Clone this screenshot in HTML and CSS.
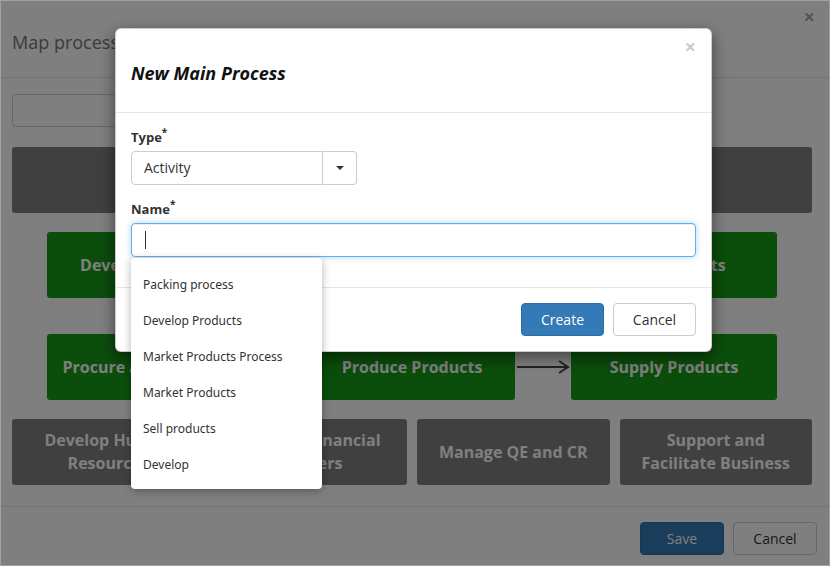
FILE: index.html
```html
<!DOCTYPE html>
<html>
<head>
<meta charset="utf-8">
<link rel="stylesheet" href="styles.css">
</head>
<body>
<div class="outer">
  <div class="o-header">
    <h4 class="o-title">Map processes</h4>
    <span class="o-close">&times;</span>
  </div>
  <div class="o-body">
    <div class="o-search"></div>
    <div class="box dark"></div>
    <div class="chain">
      <div class="box green">Develop Products</div>
      <div class="arrow"><svg width="56" height="20" viewBox="0 0 56 20"><path d="M2 10H53M44 4L53 10L44 16" fill="none" stroke="#444" stroke-width="2"/></svg></div>
      <div class="box green">Market Products</div>
      <div class="arrow"><svg width="56" height="20" viewBox="0 0 56 20"><path d="M2 10H53M44 4L53 10L44 16" fill="none" stroke="#444" stroke-width="2"/></svg></div>
      <div class="box green">Sell Products</div>
    </div>
    <div class="chain">
      <div class="box green">Procure and Purchase</div>
      <div class="arrow"><svg width="56" height="20" viewBox="0 0 56 20"><path d="M2 10H53M44 4L53 10L44 16" fill="none" stroke="#444" stroke-width="2"/></svg></div>
      <div class="box green">Produce Products</div>
      <div class="arrow"><svg width="56" height="20" viewBox="0 0 56 20"><path d="M2 10H53M44 4L53 10L44 16" fill="none" stroke="#444" stroke-width="2"/></svg></div>
      <div class="box green">Supply Products</div>
    </div>
    <div class="support">
      <div class="box dark">Develop Human Resources</div>
      <div class="box dark">Manage Financial Matters</div>
      <div class="box dark">Manage QE and CR</div>
      <div class="box dark">Support and Facilitate Business</div>
    </div>
  </div>
  <div class="o-footer">
    <button class="btn primary">Save</button>
    <button class="btn default">Cancel</button>
  </div>
  <div class="backdrop"></div>
</div>

<div class="modal">
  <div class="m-header">
    <span class="m-close">&times;</span>
    <h4 class="m-title">New Main Process</h4>
  </div>
  <div class="m-body">
    <div class="group">
      <label class="lbl">Type<sup>*</sup></label>
      <div class="select">
        <div class="sel-text">Activity</div>
        <div class="sel-btn"><span class="caret"></span></div>
      </div>
    </div>
    <div class="group last">
      <label class="lbl">Name<sup>*</sup></label>
      <div class="field"><span class="cursor"></span></div>
    </div>
  </div>
  <div class="m-footer">
    <button class="btn primary">Create</button>
    <button class="btn default">Cancel</button>
  </div>
</div>

<ul class="suggest">
  <li>Packing process</li>
  <li>Develop Products</li>
  <li>Market Products Process</li>
  <li>Market Products</li>
  <li>Sell products</li>
  <li>Develop</li>
</ul>
</body>
</html>
```

FILE: styles.css
```css
html, body {
  margin: 0;
  padding: 0;
  overflow: hidden;
}
body {
  width: 830px;
  height: 566px;
  position: relative;
  font-family: "Open Sans", "Liberation Sans", sans-serif;
  color: #333;
}
.outer {
  position: relative;
  width: 830px;
  height: 566px;
  box-sizing: border-box;
  border: 1px solid #a0a0a0;
  background: #fff;
  display: flex;
  flex-direction: column;
}
.o-header {
  height: 77px;
  box-sizing: border-box;
  border-bottom: 1px solid #e5e5e5;
  padding: 0 11px;
  display: flex;
  align-items: center;
  justify-content: space-between;
}
.o-title {
  margin: 6px 0 0;
  font-size: 18px;
  font-weight: 400;
  color: #777;
}
.o-close {
  align-self: flex-start;
  margin-top: 4px;
  margin-right: 3px;
  font-size: 20px;
  font-weight: 700;
  color: #aaa;
  line-height: 24px;
}
.o-body {
  padding: 16px 17px 0 11px;
  display: flex;
  flex-direction: column;
}
.o-search {
  width: 340px;
  height: 33px;
  box-sizing: border-box;
  border: 1px solid #ccc;
  border-radius: 4px;
  margin-bottom: 20px;
}
.box {
  height: 66px;
  box-sizing: border-box;
  border-radius: 3px;
  display: flex;
  align-items: center;
  justify-content: center;
  text-align: center;
  color: #fff;
  font-weight: 700;
  font-size: 16px;
  line-height: 23px;
  padding: 0 10px;
}
.dark { background: #808080; }
.green { background: #169a16; }
.o-body > .box.dark { margin-bottom: 19px; }
.chain {
  display: flex;
  padding: 0 35px;
  align-items: center;
}
.chain:nth-of-type(3) { margin-bottom: 36px; }
.chain + .chain { margin-bottom: 19px; }
.chain .box {
  width: 206px;
  padding: 0;
  white-space: nowrap;
}
.arrow {
  width: 56px;
  height: 20px;
  display: flex;
}
.support {
  display: grid;
  grid-template-columns: repeat(4, minmax(0, 1fr));
  gap: 10px;
}
.support .box { padding: 0 12px; }
.o-footer {
  margin-top: auto;
  border-top: 1px solid #e5e5e5;
  padding: 15px 12px 10px;
  display: flex;
  justify-content: flex-end;
  gap: 9px;
}
.btn {
  width: 84px;
  height: 33px;
  box-sizing: border-box;
  border-radius: 4px;
  font-family: "Open Sans", "Liberation Sans", sans-serif;
  font-size: 14px;
  padding: 0;
  cursor: pointer;
}
.primary {
  background: #337ab7;
  border: 1px solid #2e6da4;
  color: #fff;
}
.default {
  background: #fff;
  border: 1px solid #ccc;
  color: #333;
}
.backdrop {
  position: absolute;
  inset: 0;
  background: rgba(0, 0, 0, 0.5);
  z-index: 10;
}

/* inner modal */
.modal {
  position: absolute;
  left: 115px;
  top: 28px;
  width: 597px;
  box-sizing: border-box;
  background: #fff;
  border: 1px solid rgba(0, 0, 0, 0.2);
  border-radius: 6px;
  box-shadow: 0 5px 15px rgba(0, 0, 0, 0.5);
  z-index: 20;
}
.m-header {
  position: relative;
  padding: 32px 15px 27px;
  border-bottom: 1px solid #e5e5e5;
}
.m-close {
  position: absolute;
  top: 6px;
  right: 15px;
  font-size: 20px;
  font-weight: 700;
  line-height: 24px;
  color: #000;
  opacity: 0.2;
}
.m-title {
  margin: 0;
  font-size: 18px;
  line-height: 24px;
  font-weight: 700;
  font-style: italic;
  color: #111;
}
.m-body {
  padding: 15px 15px 30px;
}
.group { margin-bottom: 15px; }
.group.last { margin-bottom: 0; }
.lbl {
  display: block;
  font-size: 13px;
  font-weight: 700;
  line-height: 18px;
  margin-bottom: 5px;
  color: #333;
}
.lbl sup {
  font-size: 10px;
  line-height: 0;
  position: relative;
  top: -1px;
}
.select {
  display: flex;
  width: 226px;
  height: 34px;
}
.sel-text {
  flex: 1;
  box-sizing: border-box;
  border: 1px solid #ccc;
  border-radius: 4px 0 0 4px;
  padding: 0 12px;
  font-size: 14px;
  line-height: 32px;
  color: #333;
}
.sel-btn {
  width: 34px;
  box-sizing: border-box;
  border: 1px solid #ccc;
  border-left: none;
  border-radius: 0 4px 4px 0;
  display: flex;
  align-items: center;
  justify-content: center;
}
.caret {
  width: 0;
  height: 0;
  border-left: 4px solid transparent;
  border-right: 4px solid transparent;
  border-top: 4px solid #333;
}
.field {
  height: 34px;
  box-sizing: border-box;
  border: 1px solid #66afe9;
  border-radius: 4px;
  box-shadow: inset 0 1px 1px rgba(0, 0, 0, 0.075), 0 0 6px rgba(102, 175, 233, 0.5);
  padding-left: 13px;
  display: flex;
  align-items: center;
}
.cursor {
  width: 1px;
  height: 18px;
  background: #333;
}
.m-footer {
  border-top: 1px solid #e5e5e5;
  padding: 15px;
  display: flex;
  justify-content: flex-end;
  gap: 9px;
}
.m-footer .btn { width: 83px; }

/* autocomplete */
.suggest {
  position: absolute;
  left: 131px;
  top: 258px;
  width: 191px;
  margin: 0;
  padding: 9px 0 6px;
  list-style: none;
  background: #fff;
  border-radius: 4px;
  box-shadow: 0 2px 8px rgba(0, 0, 0, 0.3);
  z-index: 30;
}
.suggest li {
  height: 36px;
  line-height: 36px;
  padding: 0 12px;
  font-family: "Noto Sans", "Liberation Sans", sans-serif;
  font-size: 12px;
  color: #333;
  white-space: nowrap;
}
```
